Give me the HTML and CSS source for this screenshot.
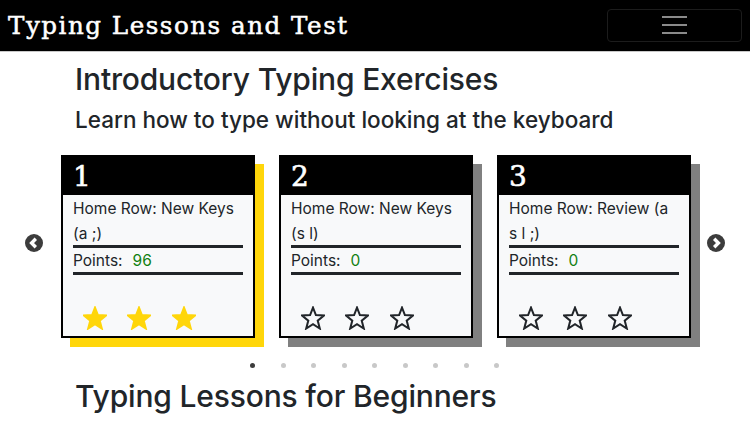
FILE: index.html
```html
<!DOCTYPE html>
<html lang="en">
<head>
<meta charset="utf-8">
<title>Typing Lessons and Test</title>
<link rel="stylesheet" href="styles.css">
</head>
<body>
<svg class="defs" width="0" height="0" aria-hidden="true">
  <defs>
    <polygon id="star" points="12,1.6 14.9,9 23,9.5 16.7,14.6 18.8,22.5 12,18.1 5.2,22.5 7.3,14.6 1,9.5 9.1,9"/>
  </defs>
</svg>
<header class="topbar">
  <div class="brand">Typing Lessons and Test</div>
  <button class="menu" aria-label="Menu"><span></span><span></span><span></span></button>
</header>
<main class="content">
  <h1 class="title">Introductory Typing Exercises</h1>
  <h2 class="subtitle">Learn how to type without looking at the keyboard</h2>
  <section class="carousel">
    <svg class="arrow" viewBox="0 0 18 18"><circle cx="9" cy="9" r="9"/><path d="M10.8 4.8 6.6 9l4.2 4.2" /></svg>
    <div class="cards">
      <article class="card card-gold">
        <div class="card-num">1</div>
        <div class="card-body">
          <p class="lesson">Home Row: New Keys (a ;)</p>
          <p class="points">Points:<span class="score">96</span></p>
          <div class="stars filled">
            <svg viewBox="0 0 24 24"><use href="#star"/></svg>
            <svg viewBox="0 0 24 24"><use href="#star"/></svg>
            <svg viewBox="0 0 24 24"><use href="#star"/></svg>
          </div>
        </div>
      </article>
      <article class="card">
        <div class="card-num">2</div>
        <div class="card-body">
          <p class="lesson">Home Row: New Keys (s l)</p>
          <p class="points">Points:<span class="score">0</span></p>
          <div class="stars">
            <svg viewBox="0 0 24 24"><use href="#star"/></svg>
            <svg viewBox="0 0 24 24"><use href="#star"/></svg>
            <svg viewBox="0 0 24 24"><use href="#star"/></svg>
          </div>
        </div>
      </article>
      <article class="card">
        <div class="card-num">3</div>
        <div class="card-body">
          <p class="lesson">Home Row: Review (a s l ;)</p>
          <p class="points">Points:<span class="score">0</span></p>
          <div class="stars">
            <svg viewBox="0 0 24 24"><use href="#star"/></svg>
            <svg viewBox="0 0 24 24"><use href="#star"/></svg>
            <svg viewBox="0 0 24 24"><use href="#star"/></svg>
          </div>
        </div>
      </article>
    </div>
    <svg class="arrow" viewBox="0 0 18 18"><circle cx="9" cy="9" r="9"/><path d="M7.2 4.8 11.4 9l-4.2 4.2" /></svg>
  </section>
  <div class="dots">
    <span class="dot active"></span><span class="dot"></span><span class="dot"></span><span class="dot"></span><span class="dot"></span><span class="dot"></span><span class="dot"></span><span class="dot"></span><span class="dot"></span>
  </div>
  <h1 class="title next">Typing Lessons for Beginners</h1>
</main>
</body>
</html>
```
FILE: styles.css
```css
* { box-sizing: border-box; }
html, body { margin: 0; padding: 0; }
body {
  width: 750px;
  height: 422px;
  overflow: hidden;
  background: #fff;
  color: #212529;
  font-family: Inter, "Liberation Sans", sans-serif;
}
.defs { position: absolute; }
.topbar {
  height: 52px;
  background: #000;
  border-bottom: 1px solid #c8c8c8;
  display: flex;
  align-items: center;
  justify-content: space-between;
  padding: 0 8px 1px 8px;
}
.brand {
  font-family: "DejaVu Serif", serif;
  font-weight: 400;
  font-size: 24.6px;
  line-height: 30px;
  letter-spacing: 1.5px;
  -webkit-text-stroke: 0.5px #fff;
  margin-top: 1px;
  color: #fff;
}
.menu {
  width: 135px;
  height: 33px;
  background: transparent;
  border: 1px solid #1c1c1c;
  border-radius: 4px;
  display: flex;
  flex-direction: column;
  align-items: center;
  justify-content: center;
  gap: 6px;
  padding: 0;
}
.menu span { width: 25px; height: 2px; background: #8a8a8a; }
.content { padding: 8px 0 0; }
.title {
  margin: 0 0 0 75px;
  font-size: 30px;
  line-height: 38px;
  font-weight: 450;
  letter-spacing: -0.17px;
}
.subtitle {
  margin: 7px 0 0 75px;
  font-size: 22.5px;
  line-height: 30px;
  font-weight: 450;
}
.carousel {
  margin-top: 20px;
  display: flex;
  align-items: center;
  padding-left: 25px;
}
.arrow { width: 18px; height: 18px; flex: none; margin-bottom: 7px; }
.arrow circle { fill: #3c3c3c; }
.arrow path { fill: none; stroke: #fff; stroke-width: 3.4; }
.cards {
  display: flex;
  gap: 24px;
  margin: 0 16px 0 18px;
}
.card {
  width: 194px;
  height: 183px;
  border: 2px solid #000;
  background: #f8f9fa;
  box-shadow: 9px 9px 0 #808080;
  display: flex;
  flex-direction: column;
  flex: none;
}
.card-gold { box-shadow: 9px 9px 0 #ffd60a; }
.card-num {
  height: 38px;
  background: #000;
  color: #fff;
  font-family: "DejaVu Serif", serif;
  font-weight: 400;
  -webkit-text-stroke: 0.6px #fff;
  font-size: 28px;
  line-height: 40px;
  padding-left: 10px;
}
.card-body {
  flex: 1;
  padding: 0 10px;
  display: flex;
  flex-direction: column;
}
.lesson {
  margin: 0;
  padding-top: 1px;
  font-size: 15.5px;
  line-height: 25px;
  height: 53px;
  border-bottom: 3px solid #212529;
}
.points {
  margin: 0;
  font-size: 15.5px;
  line-height: 25px;
  height: 27px;
  border-bottom: 3px solid #212529;
}
.score { color: #118011; margin-left: 10px; }
.stars {
  display: flex;
  gap: 20.7px;
  margin-top: 31px;
  margin-left: 9.6px;
}
.stars svg { width: 24px; height: 24px; flex: none; }
.stars use { fill: none; stroke: #212529; stroke-width: 2; }
.stars.filled use { fill: #ffd60a; stroke: #ffd60a; stroke-width: 2; }
.dots {
  margin-top: 25px;
  display: flex;
  gap: 25.55px;
  padding-left: 250px;
}
.dot { width: 5px; height: 5px; border-radius: 50%; background: #c8c8c8; flex: none; }
.dot.active { background: #3c3c3c; }
.next { margin-top: 9px; }
```
